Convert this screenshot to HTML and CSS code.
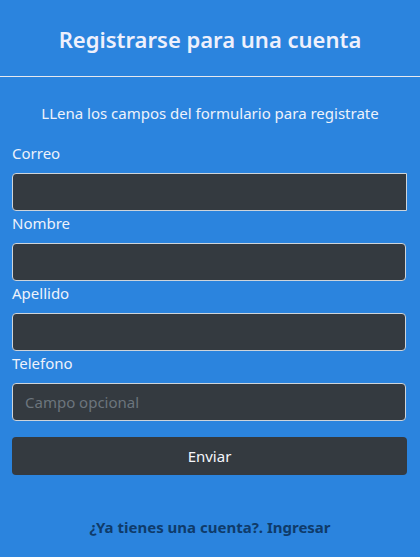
FILE: index.html
```html
<!DOCTYPE html>
<html lang="es">
<head>
<meta charset="utf-8">
<title>Registro</title>
<link rel="stylesheet" href="styles.css">
</head>
<body>
<div class="page">
  <header class="header">
    <h1 class="title">Registrarse para una cuenta</h1>
  </header>
  <hr class="divider">
  <p class="subtitle">LLena los campos del formulario para registrate</p>
  <form class="form">
    <label class="label" for="correo">Correo</label>
    <input class="input input-first" id="correo" type="text">
    <label class="label" for="nombre">Nombre</label>
    <input class="input" id="nombre" type="text">
    <label class="label" for="apellido">Apellido</label>
    <input class="input" id="apellido" type="text">
    <label class="label" for="telefono">Telefono</label>
    <input class="input" id="telefono" type="text" placeholder="Campo opcional">
    <button class="button" type="button">Enviar</button>
  </form>
  <p class="footer"><a class="footer-link" href="#">¿Ya tienes una cuenta?. Ingresar</a></p>
</div>
</body>
</html>
```
FILE: styles.css
```css
html, body {
  margin: 0;
  padding: 0;
  height: 100%;
}
body {
  background: #2b84de;
  font-family: "Noto Sans", "Open Sans", sans-serif;
  color: #eef2fb;
}
.page {
  display: flex;
  flex-direction: column;
}
.header {
  height: 76px;
  display: flex;
  align-items: center;
  justify-content: center;
}
.title {
  margin: 0;
  font-size: 22px;
  font-weight: 600;
  color: #eef0fc;
  line-height: 1;
  padding-top: 2px;
}
.divider {
  margin: 0;
  border: 0;
  border-top: 1px solid #e6e9f0;
  height: 0;
}
.subtitle {
  margin: 24px 0 0;
  text-align: center;
  font-size: 15px;
  line-height: 24px;
}
.form {
  display: flex;
  flex-direction: column;
  padding: 16px 13px 0 12px;
}
.label {
  font-size: 15px;
  line-height: 24px;
  margin-bottom: 8px;
}
.input {
  box-sizing: border-box;
  height: 38px;
  width: 394px;
  background: #343a40;
  border: 1px solid #ced4da;
  border-radius: 4px;
  padding: 6px 12px;
  font-family: inherit;
  font-size: 15px;
  color: #eef2fb;
  outline: none;
}
.input-first {
  width: 395px;
  border-top-right-radius: 0;
  border-bottom-right-radius: 0;
}
.input::placeholder {
  color: #6c757d;
}
.button {
  margin-top: 16px;
  height: 38px;
  width: 395px;
  background: #343a40;
  border: 0;
  border-radius: 4px;
  font-family: inherit;
  font-size: 15px;
  color: #f4f6fb;
}
.footer {
  margin: 40px 0 0;
  text-align: center;
  font-size: 15px;
  line-height: 24px;
  font-weight: 700;
}
.footer-link {
  color: #0f3b6a;
  text-decoration: none;
}
```
